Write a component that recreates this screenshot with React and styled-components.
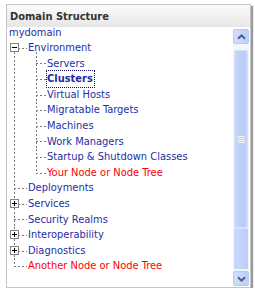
import React from 'react';
import styled, { createGlobalStyle, css } from 'styled-components';

const ROW = 15.6;

const GlobalStyle = createGlobalStyle`
  html, body {
    margin: 0;
    padding: 0;
    background: #ffffff;
  }
  body {
    font-family: "DejaVu Sans Condensed", "DejaVu Sans", "Liberation Sans", sans-serif;
    font-stretch: condensed;
  }
`;

const Page = styled.div`
  padding: 4px 0 0 6px;
`;

const Panel = styled.div`
  box-sizing: border-box;
  width: 245px;
  height: 284px;
  border: 1px solid #c4c4c4;
  background: #ffffff;
  box-shadow: 2px 2px 1px #9a9a9a;
  display: flex;
  flex-direction: column;
`;

const Header = styled.div`
  height: 22px;
  flex: none;
  padding-left: 3px;
  display: flex;
  align-items: center;
  background: linear-gradient(#fbfbfb, #e6e6e6);
  font-size: 11px;
  font-weight: bold;
  color: #333333;
`;

const Body = styled.div`
  flex: 1;
  display: flex;
  min-height: 0;
`;

const Tree = styled.div`
  flex: 1;
  font-size: 11px;
  color: #1d2ea6;
  overflow: hidden;
`;

const RootLabel = styled.div`
  height: 13px;
  line-height: 12px;
  padding-left: 2px;
`;

const List = styled.ul`
  list-style: none;
  margin: 0 0 0 ${(p) => (p.$level === 1 ? 7 : 8)}px;
  padding: 0;
`;

const dashV = 'repeating-linear-gradient(to bottom, #7c7c7c 0 2px, transparent 2px 4px)';
const dashH = 'repeating-linear-gradient(to right, #7c7c7c 0 2px, transparent 2px 4px)';

const Item = styled.li`
  position: relative;
  padding-left: ${(p) => (p.$level === 1 ? 14 : 11)}px;

  &::before {
    content: '';
    position: absolute;
    left: 0;
    top: ${ROW / 2}px;
    width: ${(p) => (p.$level === 1 ? 13 : 10)}px;
    height: 1px;
    background: ${dashH};
  }

  &::after {
    content: '';
    position: absolute;
    left: 0;
    width: 1px;
    background: ${dashV};
    ${(p) =>
      p.$first && p.$level === 1
        ? css`top: ${ROW / 2}px; bottom: 0;`
        : p.$first
        ? css`top: -4px; bottom: 0;`
        : p.$last
        ? css`top: 0; height: ${ROW / 2}px;`
        : css`top: 0; bottom: 0;`}
  }
`;

const Row = styled.div`
  height: ${ROW}px;
  line-height: ${ROW}px;
  white-space: nowrap;
`;

const Link = styled.span`
  color: ${(p) => (p.$red ? '#ff0000' : '#1d2ea6')};
  font-weight: ${(p) => (p.$active ? 'bold' : 'normal')};
  ${(p) =>
    p.$active &&
    css`
      outline: 1px dotted #101070;
      outline-offset: 0;
      padding: 1px 1px 2px 0;
    `}
`;

const Toggle = styled.span`
  position: absolute;
  z-index: 1;
  left: -4px;
  top: ${(ROW - 9) / 2}px;
  box-sizing: border-box;
  width: 9px;
  height: 9px;
  border: 1px solid #848484;
  background: #ffffff;

  &::before {
    content: '';
    position: absolute;
    left: 1px;
    top: 3px;
    width: 5px;
    height: 1px;
    background: #000000;
  }

  ${(p) =>
    !p.$open &&
    css`
      &::after {
        content: '';
        position: absolute;
        left: 3px;
        top: 1px;
        width: 1px;
        height: 5px;
        background: #000000;
      }
    `}
`;

const Scrollbar = styled.div`
  width: 16px;
  flex: none;
  margin: 2px 1px 1px 0;
  display: flex;
  flex-direction: column;
  background: #f3f5fb;
`;

const Arrow = styled.div`
  box-sizing: border-box;
  height: 15px;
  flex: none;
  border: 1px solid #b7c8f4;
  border-radius: 2px;
  background: linear-gradient(to right, #d2defc, #bccefa);
  display: flex;
  align-items: center;
  justify-content: center;
`;

const Gap = styled.div`
  height: ${(p) => p.$h}px;
  flex: none;
`;

const Thumb = styled.div`
  box-sizing: border-box;
  height: 178px;
  flex: none;
  margin: 0 1px;
  border: 1px solid #d6e0fb;
  border-radius: 2px;
  background: linear-gradient(to right, #c9d7fb, #b9cbf9 70%, #c6d4fa);
  display: flex;
  align-items: center;
  justify-content: center;
`;

const TrackLow = styled.div`
  flex: 1;
  margin: 0 1px 2px;
  background: linear-gradient(to right, #cad8fb, #bccdf9);
  border-top: 1px solid #d8e2fb;
`;

const Chevron = ({ down }) => (
  <svg width="9" height="6" viewBox="0 0 9 6">
    <path
      d={down ? 'M1 1.2 L4.5 4.6 L8 1.2' : 'M1 4.8 L4.5 1.4 L8 4.8'}
      fill="none"
      stroke="#4b5d82"
      strokeWidth="2"
    />
  </svg>
);

const Grip = () => (
  <svg width="7" height="7" viewBox="0 0 7 7">
    {[0.5, 2.5, 4.5, 6.5].map((y) => (
      <line key={y} x1="0" x2="7" y1={y} y2={y} stroke="#eef3fe" strokeWidth="1" />
    ))}
  </svg>
);

const environment = [
  { label: 'Servers' },
  { label: 'Clusters', active: true },
  { label: 'Virtual Hosts' },
  { label: 'Migratable Targets' },
  { label: 'Machines' },
  { label: 'Work Managers' },
  { label: 'Startup & Shutdown Classes' },
  { label: 'Your Node or Node Tree', red: true },
];

const topLevel = [
  { label: 'Environment', toggle: 'open', children: environment },
  { label: 'Deployments' },
  { label: 'Services', toggle: 'closed' },
  { label: 'Security Realms' },
  { label: 'Interoperability', toggle: 'closed' },
  { label: 'Diagnostics', toggle: 'closed' },
  { label: 'Another Node or Node Tree', red: true },
];

const renderItems = (items, level) =>
  items.map((node, i) => (
    <Item
      key={node.label}
      $level={level}
      $first={i === 0}
      $last={i === items.length - 1}
    >
      {node.toggle && <Toggle $open={node.toggle === 'open'} />}
      <Row>
        <Link $red={node.red} $active={node.active}>
          {node.label}
        </Link>
      </Row>
      {node.children && <List $level={level + 1}>{renderItems(node.children, level + 1)}</List>}
    </Item>
  ));

export default function App() {
  return (
    <Page>
      <GlobalStyle />
      <Panel>
        <Header>Domain Structure</Header>
        <Body>
          <Tree>
            <RootLabel>mydomain</RootLabel>
            <List $level={1}>{renderItems(topLevel, 1)}</List>
          </Tree>
          <Scrollbar>
            <Arrow>
              <Chevron />
            </Arrow>
            <Gap $h={6} />
            <Thumb>
              <Grip />
            </Thumb>
            <TrackLow />
            <Arrow>
              <Chevron down />
            </Arrow>
          </Scrollbar>
        </Body>
      </Panel>
    </Page>
  );
}
